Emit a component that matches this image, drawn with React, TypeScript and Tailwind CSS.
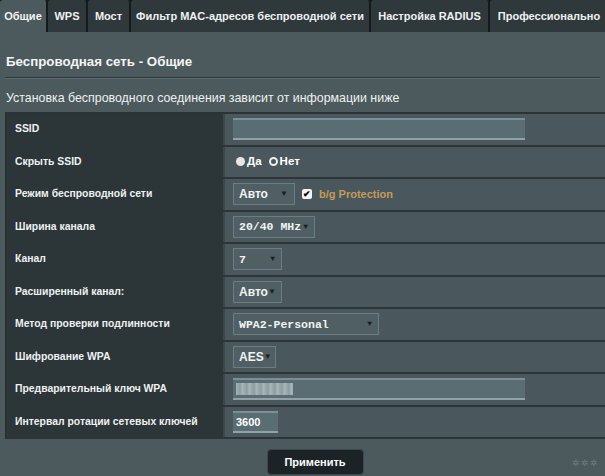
import React from 'react';

const tabs = [
  { label: 'Общие', w: 'w-[48px]', active: true },
  { label: 'WPS', w: 'w-[40px]' },
  { label: 'Мост', w: 'w-[43px]' },
  { label: 'Фильтр MAC-адресов беспроводной сети', w: 'w-[240px]' },
  { label: 'Настройка RADIUS', w: 'w-[119px]' },
  { label: 'Профессионально', w: 'w-[120px]' },
];

function Select({ value, w, mono = true }: { value: string; w: string; mono?: boolean }) {
  return (
    <div
      className={`${w} h-[22px] flex items-center justify-between whitespace-nowrap pl-[5px] pr-[6px] bg-[#4f5f64] border border-[#6b7d83] text-[#f2f4f4] font-bold ${
        mono ? 'text-[11.5px] font-["Liberation_Mono",monospace]' : 'text-[12px] font-["Liberation_Sans",sans-serif]'
      }`}
    >
      <span>{value}</span>
      <span className="text-[8px] text-[#1a1f21]">▼</span>
    </div>
  );
}

function TextInput({ w, children }: { w: string; children?: React.ReactNode }) {
  return (
    <div className={`${w} h-[22px] bg-[#5a6d73] border-t-2 border-t-[#7c8f94] border-b-2 border-b-[#8fa3a8] flex items-center px-[3px] text-[11px] font-bold text-white font-["Liberation_Sans",sans-serif]`}>
      {children}
    </div>
  );
}

const rows: { label: string; value: React.ReactNode }[] = [
  { label: 'SSID', value: <TextInput w="w-[292px]" /> },
  {
    label: 'Скрыть SSID',
    value: (
      <div className="flex items-center gap-[2px] text-[11.5px] font-bold text-white ml-[3px]">
        <span className="w-[9px] h-[9px] rounded-full bg-[#e6e6e6]" />
        <span className="mr-[5px]">Да</span>
        <span className="w-[9px] h-[9px] rounded-full border-[2px] border-[#f0f0f0]" />
        <span>Нет</span>
      </div>
    ),
  },
  {
    label: 'Режим беспроводной сети',
    value: (
      <div className="flex items-center gap-[7px]">
        <Select value="Авто" w="w-[62px]" mono={false} />
        <span className="w-[10px] h-[10px] bg-[#f4f4f4] rounded-[2px] flex items-center justify-center text-[9px] leading-none text-black font-bold">✔</span>
        <span className="text-[11px] text-[#c49a5a] font-bold">b/g Protection</span>
      </div>
    ),
  },
  { label: 'Ширина канала', value: <Select value="20/40 MHz" w="w-[82px]" /> },
  { label: 'Канал', value: <Select value="7" w="w-[49px]" /> },
  { label: 'Расширенный канал:', value: <Select value="Авто" w="w-[49px]" mono={false} /> },
  { label: 'Метод проверки подлинности', value: <Select value="WPA2-Personal" w="w-[146px]" /> },
  { label: 'Шифрование WPA', value: <Select value="AES" w="w-[43px]" mono={false} /> },
  {
    label: 'Предварительный ключ WPA',
    value: (
      <TextInput w="w-[292px]">
        <span className="w-[57px] h-[12px] bg-[repeating-linear-gradient(90deg,#b7c3c6_0px,#9aa9ad_4px,#c4ced1_7px)] opacity-80" />
      </TextInput>
    ),
  },
  { label: 'Интервал ротации сетевых ключей', value: <TextInput w="w-[45px]">3600</TextInput> },
];

export default function App() {
  return (
    <div className="w-[605px] h-[476px] overflow-hidden bg-[#4c595d] font-['Liberation_Sans',sans-serif] text-white">
      <div className="flex h-[32px] bg-[#141a1c]">
        {tabs.map((t) => (
          <div
            key={t.label}
            className={`${t.w} shrink-0 flex items-center justify-center text-[11px] font-bold whitespace-nowrap border-r-[2px] border-[#151b1d] rounded-t-[3px] ${
              t.active ? 'bg-[#4c595d] text-[#f4f6f6]' : 'bg-[#2f393c] text-[#eef1f2]'
            }`}
          >
            {t.label}
          </div>
        ))}
      </div>

      <div className="px-[6px] pt-[21px]">
        <h1 className="text-[13.3px] font-bold text-[#f3f5f5] leading-[18px]">Беспроводная сеть - Общие</h1>
      </div>
      <div className="mx-[5px] mt-[6px] border-t border-[#2e393c] border-b border-b-[#5d6b70]" />
      <div className="px-[6px] pt-[12px] text-[12.4px] text-[#eef1f1] leading-[14px]">
        Установка беспроводного соединения зависит от информации ниже
      </div>

      <div className="ml-[5px] mt-[7px] border-t-2 border-[#2a3336] border-l border-l-[#252d30]">
        {rows.map((r) => (
          <div key={r.label} className="flex h-[32.5px] border-b-[2px] border-[#2c3538]">
            <div className="w-[217px] shrink-0 bg-[#2c3538] flex items-center pl-[9px] text-[10.4px] font-bold text-[#eef1f2]">
              {r.label}
            </div>
            <div className="flex-1 bg-[#4a585d] border-l-2 border-[#3b474b] flex items-center pl-[8px]">
              {r.value}
            </div>
          </div>
        ))}
      </div>

      <div className="relative flex justify-center mt-[10px]">
        <button className="ml-[25px] w-[97px] h-[26px] rounded-[4px] bg-[#1c2326] border border-[#3c484c] text-[11px] font-bold text-white">
          Применить
        </button>
        <span className="absolute right-[6px] top-[8px] text-[9px] tracking-[1px] text-[#6f7e83]">✲✲✲</span>
      </div>
    </div>
  );
}
